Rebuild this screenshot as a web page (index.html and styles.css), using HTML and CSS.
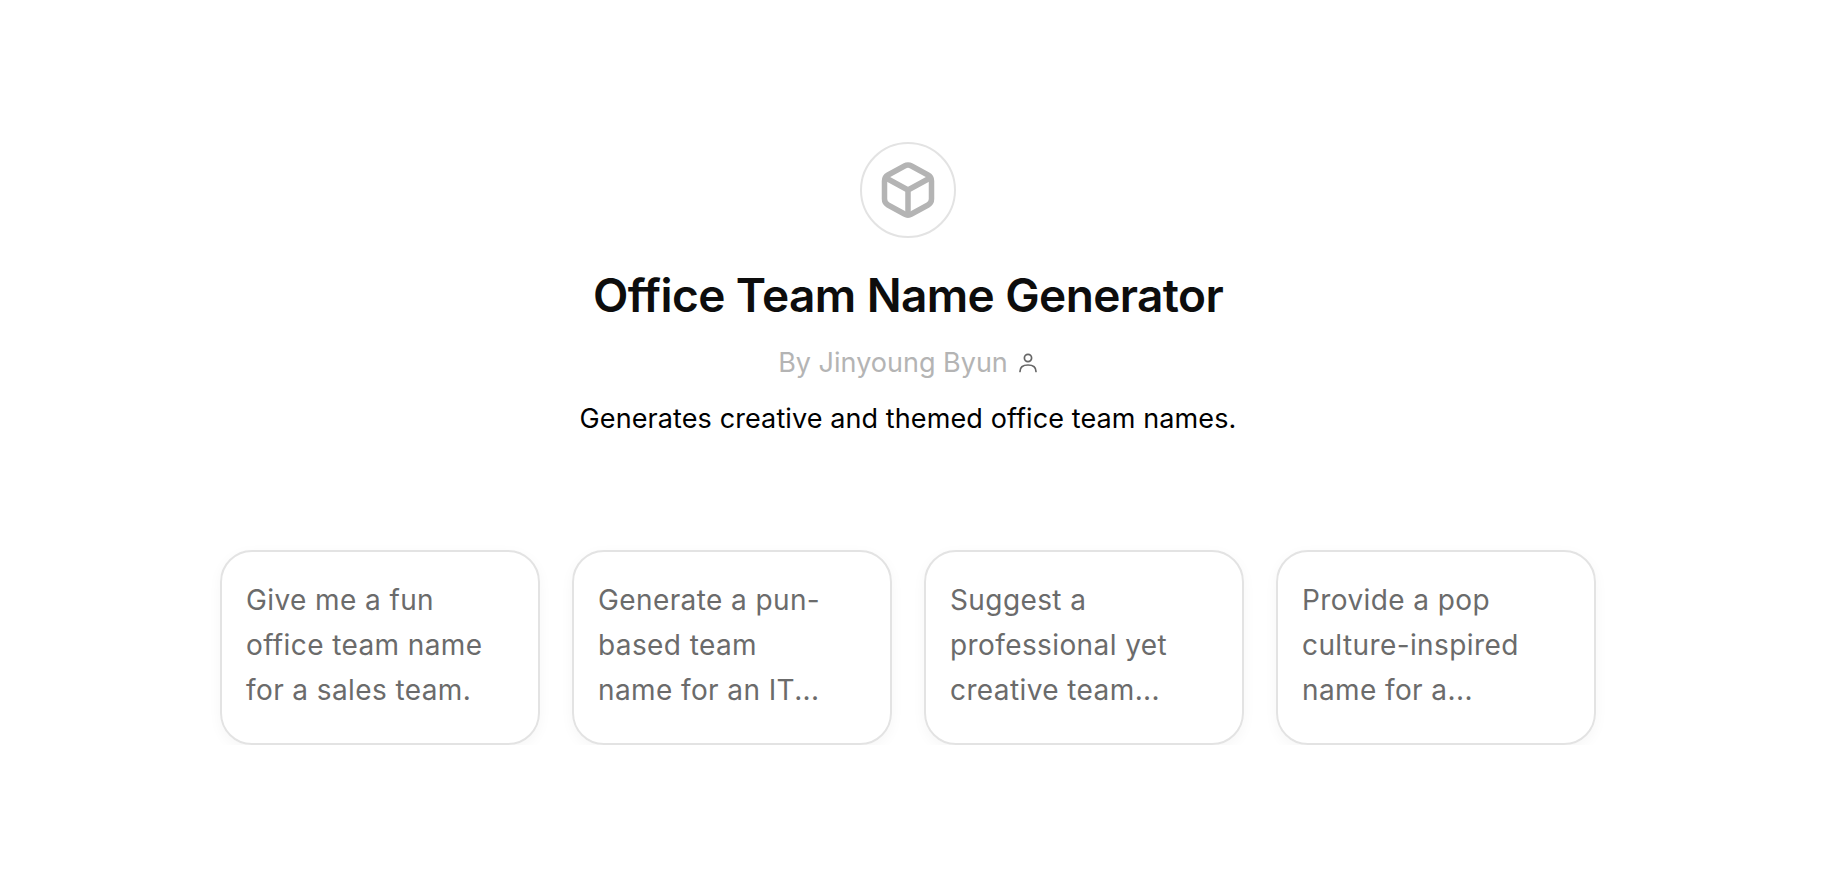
FILE: index.html
```html
<!DOCTYPE html>
<html lang="en">
<head>
    <meta charset="UTF-8">
    <meta name="viewport" content="width=device-width, initial-scale=1.0">
    <title>Office Team Name Generator</title>
    <link rel="stylesheet" href="styles.css">
</head>
<body>
    <div class="container">
        <header class="intro">
            <div class="avatar">
                <svg class="cube" viewBox="0 0 60 60" fill="none" stroke="#b4b4b4" stroke-width="5.5" stroke-linejoin="round" stroke-linecap="round">
                    <path d="M26.5 6Q30 4 33.5 6L50 15Q53.5 17 53.5 21V39Q53.5 43 50 45L33.5 54Q30 56 26.5 54L10 45Q6.5 43 6.5 39V21Q6.5 17 10 15Z"/>
                    <path d="M8 18 30 30 52 18M30 30V55"/>
                </svg>
            </div>
            <h1>Office Team Name Generator</h1>
            <div class="author">
                <span>By Jinyoung Byun</span>
                <svg class="person" viewBox="0 0 20 20" fill="none" stroke="#666" stroke-width="1.7" stroke-linecap="round">
                    <circle cx="10" cy="5" r="3.6"/>
                    <path d="M2 18.5C2 14.5 5 12 10 12S18 14.5 18 18.5"/>
                </svg>
            </div>
            <p class="desc">Generates creative and themed office team names.</p>
        </header>

        <!-- Prompt suggestions -->
        <div class="cards">
            <div class="card"><p>Give me a fun<br>office team name<br>for a sales team.</p></div>
            <div class="card"><p>Generate a pun-<br>based team<br>name for an IT...</p></div>
            <div class="card"><p>Suggest a<br>professional yet<br>creative team...</p></div>
            <div class="card"><p>Provide a pop<br>culture-inspired<br>name for a...</p></div>
        </div>
    </div>
</body>
</html>
```

FILE: styles.css
```css
body {
    font-family: Inter, "Liberation Sans", sans-serif;
    background-color: #ffffff;
    color: #0d0d0d;
    margin: 0;
    padding: 0;
}

.container {
    width: 1816px;
    padding-top: 142px;
    display: flex;
    flex-direction: column;
    align-items: center;
}

.intro {
    display: flex;
    flex-direction: column;
    align-items: center;
}

.avatar {
    width: 96px;
    height: 96px;
    box-sizing: border-box;
    border: 2px solid #e3e3e3;
    border-radius: 50%;
    display: flex;
    justify-content: center;
    align-items: center;
}

.cube {
    width: 60px;
    height: 60px;
}

h1 {
    margin: 29px 0 0;
    font-size: 46px;
    line-height: 56px;
    font-weight: 600;
    letter-spacing: -0.6px;
    font-variant-ligatures: none;
}

.author {
    margin-top: 20px;
    display: flex;
    align-items: center;
    gap: 10px;
    font-size: 27px;
    line-height: 40px;
    color: #b4b4b4;
}

.person {
    width: 20px;
    height: 20px;
}

.desc {
    margin: 16px 0 0;
    font-size: 27px;
    line-height: 40px;
    letter-spacing: 0.1px;
    color: #000000;
}

.cards {
    margin-top: 111px;
    display: flex;
    gap: 32px;
}

.card {
    width: 320px;
    box-sizing: border-box;
    padding: 26px 24px 30px;
    border: 2px solid #e3e3e3;
    border-radius: 32px;
    box-shadow: 0 4px 14px rgba(0, 0, 0, 0.04);
}

.card p {
    margin: 0;
    font-size: 28px;
    line-height: 45px;
    letter-spacing: 0.4px;
    color: #6b6b6b;
}
```
